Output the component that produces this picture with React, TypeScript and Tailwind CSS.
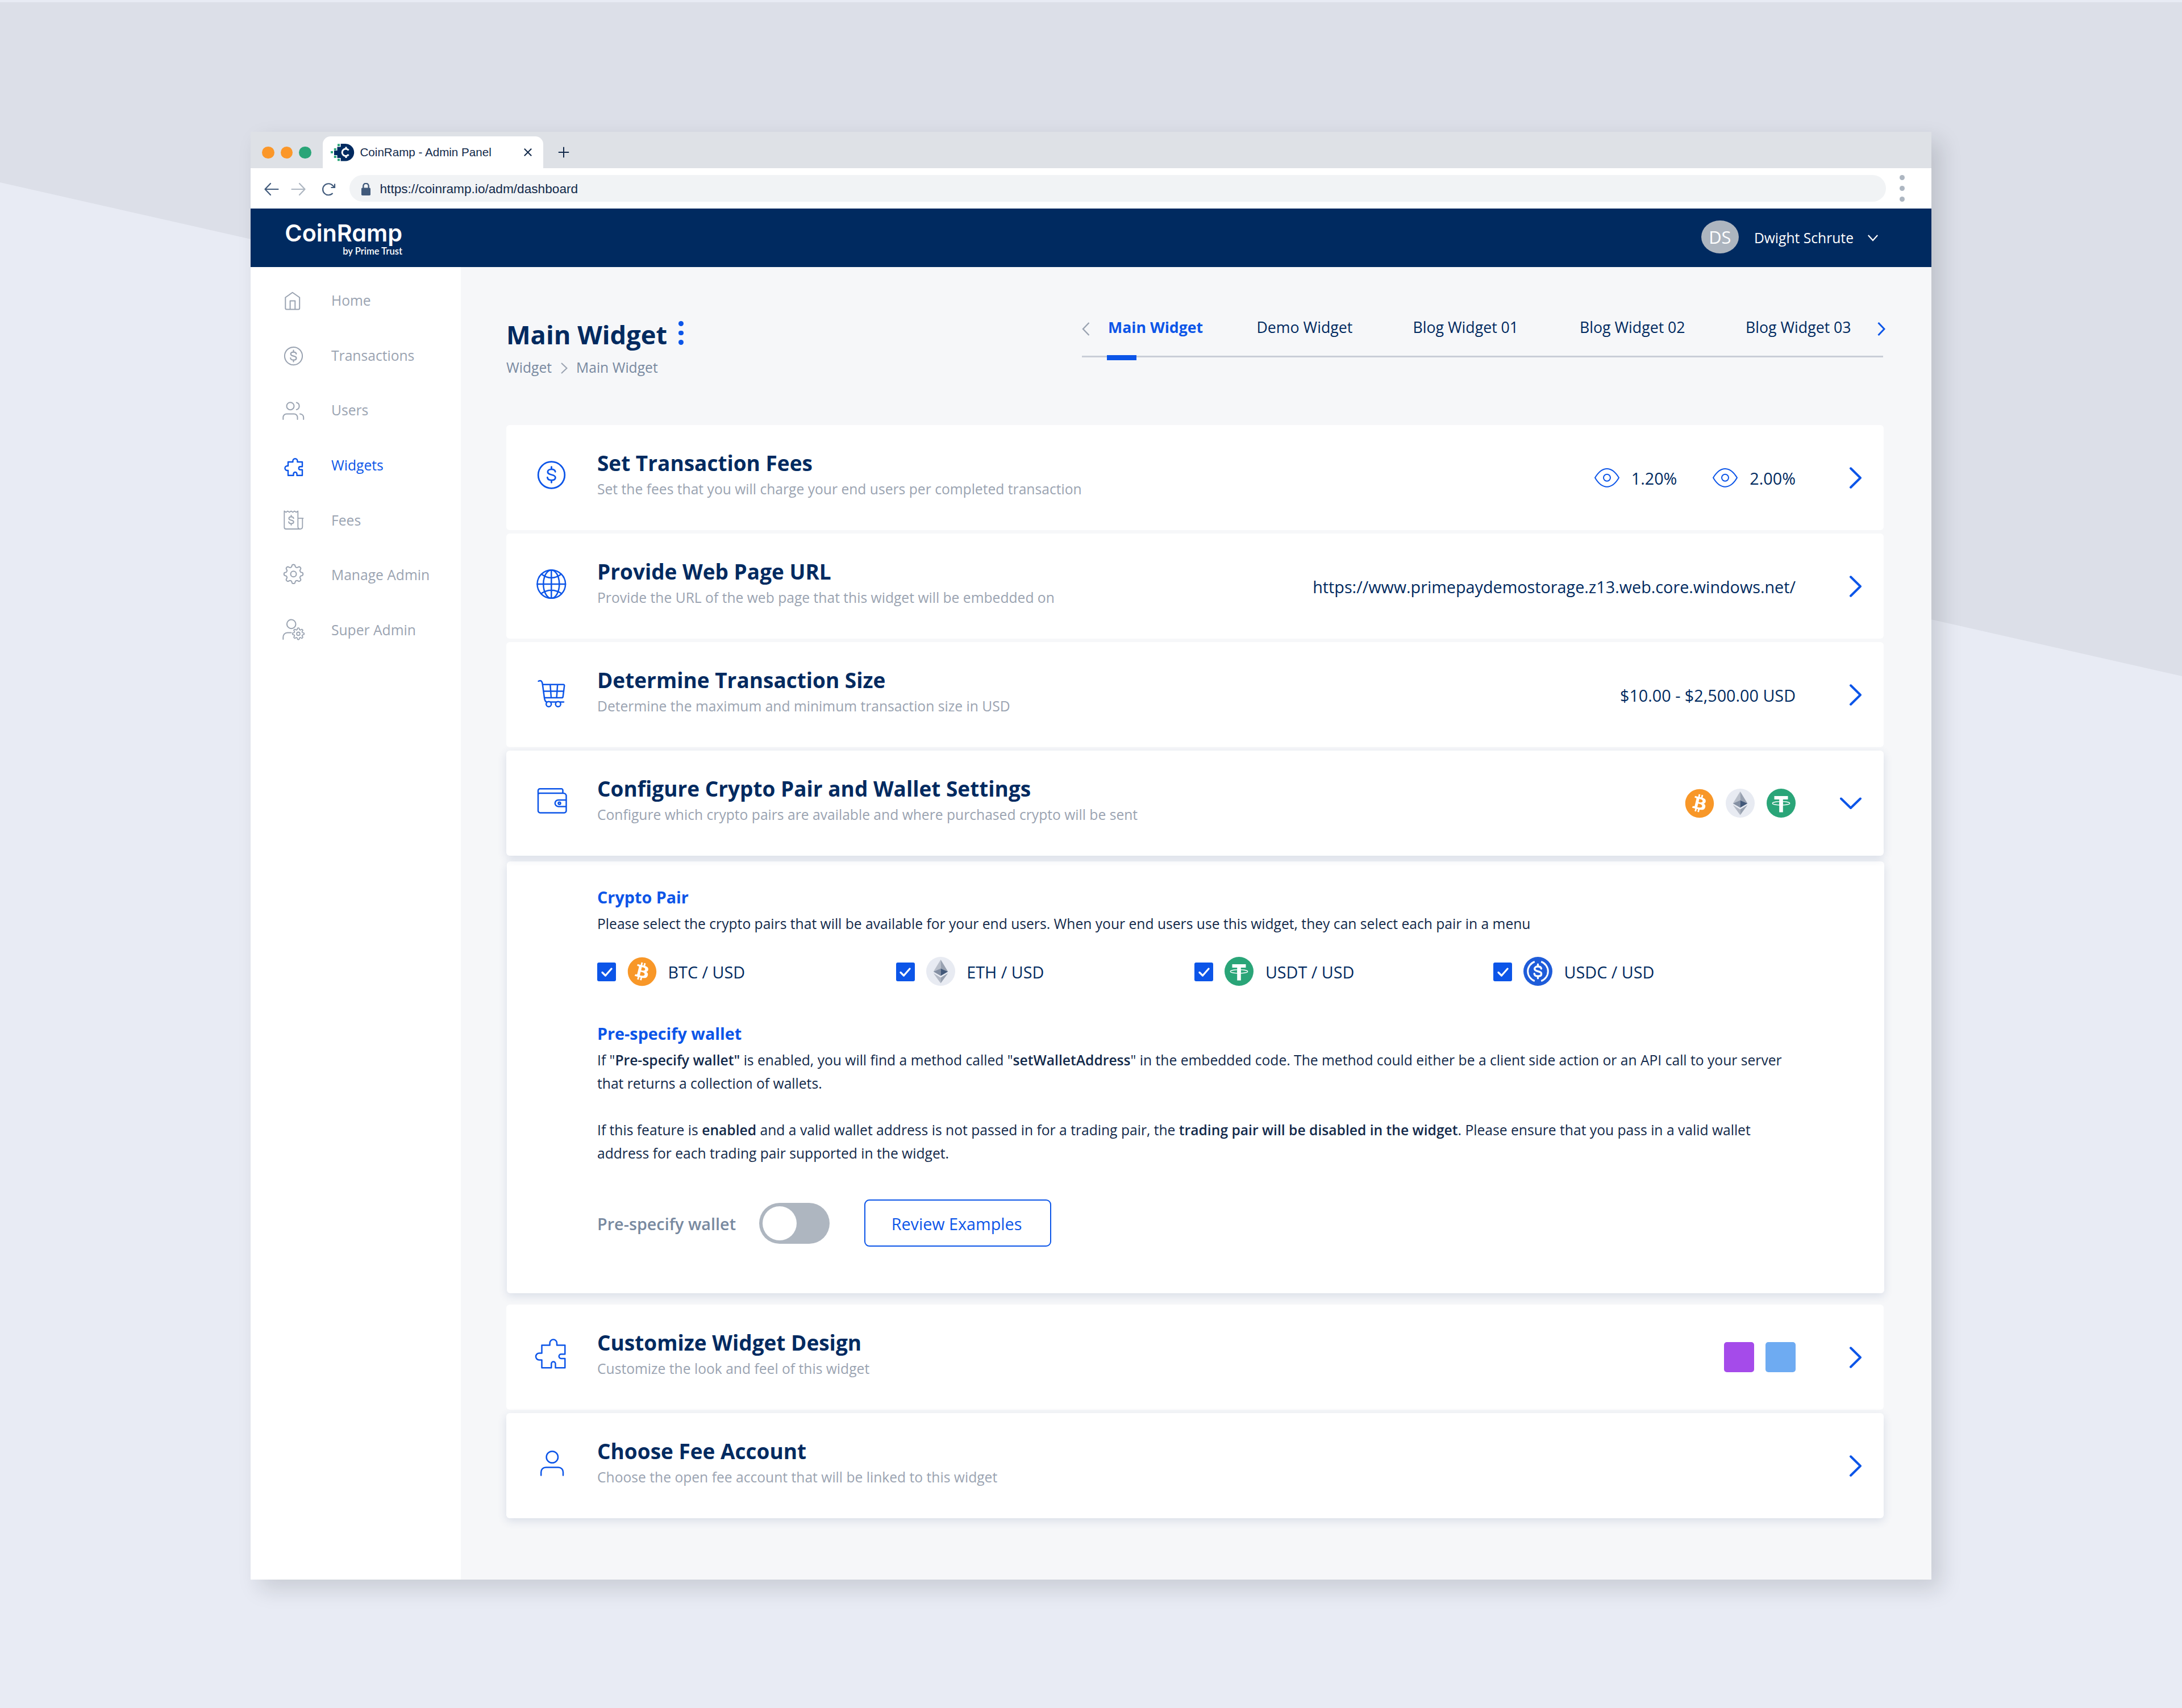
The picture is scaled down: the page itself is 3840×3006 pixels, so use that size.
import React from "react";
import { FaBitcoin } from "react-icons/fa";

type P = { children?: React.ReactNode };

/* ---------- shared marks ---------- */

function DollarMark({ cx, cy, k, sw }: { cx: number; cy: number; k: number; sw: number }) {
  return (
    <path
      transform={`translate(${cx} ${cy}) scale(${k})`}
      strokeWidth={sw / k}
      strokeLinecap="round"
      d="M4.9-3.8C4.5-5.9 2.7-7 0-7S-4.8-5.7-4.8-3.6-3.2-.7 0 0 5 1.5 5 3.6 3 7 0 7-5 5.700-5.200 3.400M0-10v3M0 7v3"
    />
  );
}

function gearPath(cx: number, cy: number, r: number, amp: number) {
  const n = 160;
  let d = "";
  for (let i = 0; i < n; i++) {
    const a = (i / n) * Math.PI * 2;
    const rad = r + amp * Math.tanh(1.8 * Math.cos(8 * a));
    d += `${i ? "L" : "M"}${(cx + rad * Math.cos(a)).toFixed(2)} ${(cy + rad * Math.sin(a)).toFixed(2)}`;
  }
  return d + "Z";
}

/* ---------- sidebar icons ---------- */

function NavSvg({ children }: P) {
  return (
    <svg width="40" height="40" viewBox="0 0 40 40" fill="none" stroke="currentColor" strokeWidth="2" strokeLinejoin="round" strokeLinecap="round" className="shrink-0 overflow-visible">
      {children}
    </svg>
  );
}

const navItems = [
  {
    label: "Home",
    icon: (
      <NavSvg>
        <path d="M5.3 15.500 17.700 6.800 30.200 15.500V34.300a2.200 2.200 0 0 1-2.200 2.200H7.500a2.200 2.200 0 0 1-2.200-2.200ZM13.600 36.500V21.500h8.700v15" />
      </NavSvg>
    ),
  },
  {
    label: "Transactions",
    icon: (
      <NavSvg>
        <circle cx="19.500" cy="21.600" r="15.600" />
        <DollarMark cx={19.5} cy={21.6} k={1} sw={2.2} />
      </NavSvg>
    ),
  },
  {
    label: "Users",
    icon: (
      <NavSvg>
        <circle cx="14" cy="13.700" r="6.500" />
        <path d="M1.300 37v-3.500c0-3.500 2.700-6 6-6h13.200c3.300 0 6 2.500 6 6V37M24.800 7.500a6.400 6.400 0 0 1 0 12.400M31 27.500c3.700.4 6.200 2.900 6.200 6.200V37" />
      </NavSvg>
    ),
  },
  {
    label: "Widgets",
    active: true,
    icon: (
      <NavSvg>
        <path strokeWidth="2.400" d="M10 15H18.400V13.300a4 4 0 0 1 8 0V15H35V23.300H31.500a2.700 2.700 0 0 0 0 5.400H35V38.700H25.500V36a3 3 0 0 0-6 0V38.700H10V30H8.500a4 4 0 0 1 0-8H10Z" />
      </NavSvg>
    ),
  },
  {
    label: "Fees",
    icon: (
      <NavSvg>
        <path strokeWidth="1.800" d="M3.300 4.500 6.300 6.500 9.300 4.500 12.300 6.500 15.300 4.500 18.300 6.500 21.300 4.500 24.300 6.500 27.300 4.500V32c0 2.500 1.500 4 4 4s4-1.500 4-4V17.200M3.300 4.500V33a3 3 0 0 0 3 3H31.300M27.300 17.200H36.500" />
        <DollarMark cx={15.5} cy={20.5} k={0.85} sw={2} />
      </NavSvg>
    ),
  },
  {
    label: "Manage Admin",
    icon: (
      <NavSvg>
        <path d={gearPath(19.5, 19.3, 14.7, 2.1)} />
        <circle cx="19.500" cy="19.300" r="5" />
      </NavSvg>
    ),
  },
  {
    label: "Super Admin",
    icon: (
      <NavSvg>
        <circle cx="15.700" cy="10.400" r="7.800" />
        <path d="M1.300 37V33.500c0-4.600 3-7.900 7.500-7.900H15.500" />
        <path strokeWidth="1.800" d={gearPath(28, 27.4, 8.8, 1.5)} />
        <circle strokeWidth="1.800" cx="28" cy="27.400" r="2.900" />
      </NavSvg>
    ),
  },
];

/* ---------- card icons ---------- */

function CardSvg({ children }: P) {
  return (
    <svg width="60" height="60" viewBox="0 0 60 60" fill="none" stroke="#0c55e8" strokeWidth="2.500" strokeLinejoin="round" strokeLinecap="round" className="mt-[58px] shrink-0 overflow-visible">
      {children}
    </svg>
  );
}

const dollarIcon = (
  <CardSvg>
    <circle cx="29.500" cy="30" r="23.300" strokeWidth="2.800" />
    <DollarMark cx={29.5} cy={29.5} k={1.38} sw={2.8} />
  </CardSvg>
);
const globeIcon = (
  <CardSvg>
    <circle cx="29.300" cy="31" r="24.800" />
    <ellipse cx="29.300" cy="31" rx="14" ry="24.800" />
    <path d="M29.300 6.200V55.800M4.500 31H54.100M12 13.500Q29.300 26.500 46.600 13.500M11.500 47.500Q29.300 36 47.100 47.500" />
  </CardSvg>
);
const cartIcon = (
  <CardSvg>
    <path d="M6.500 10.800c2.500-1 4.400-.9 5.500.3 1 1 1.500 3 1.800 5.400l3.200 23.500c.4 3.500 1.500 6.500 4 7.600H51M13.800 16.800H50.500a1.700 1.700 0 0 1 1.700 2L49.800 38c-.2 1.400-1 2-2.200 2H17M15.500 28.500H51M27.300 16.800 29 40M40.200 16.800 38.600 40" />
    <circle cx="24.700" cy="51.300" r="4.500" fill="#fff" />
    <circle cx="41.200" cy="51.300" r="4.500" fill="#fff" />
  </CardSvg>
);
const walletIcon = (
  <CardSvg>
    <path d="M6 20V12.500a3.200 3.200 0 0 1 3.200-3.200H47a2.500 2.500 0 0 1 2.500 2.500V17M6 19.500a2.500 2.500 0 0 1 2.500-2.500H50.500a5 5 0 0 1 5 5V48a3.500 3.500 0 0 1-3.500 3.500H9.500A3.500 3.500 0 0 1 6 48ZM55.500 29H41.500a5.700 5.700 0 0 0 0 11.400H55.500" />
    <circle cx="43.500" cy="34.700" r="2" />
  </CardSvg>
);
const puzzleIcon = (
  <CardSvg>
    <path d="M12.500 13.500H26.600V9.800a6.200 6.200 0 0 1 12.400 0V13.500H53.300V29.300H46.500a3.800 3.800 0 0 0 0 7.600H53.300V53.300H36.500V46.200a3.600 3.600 0 0 0-7.200 0V53.300H12.500V39.500H8a6 6 0 0 1 0-12H12.500Z" />
  </CardSvg>
);
const personIcon = (
  <CardSvg>
    <circle cx="30.800" cy="19.400" r="10.200" />
    <path d="M11.200 51.500V46c0-5 3.500-8.500 8.500-8.500H41.500c5 0 8.500 3.500 8.500 8.500v5.500" />
  </CardSvg>
);

function Eye() {
  return (
    <svg width="44" height="34" viewBox="0 0 44 34" fill="none" stroke="#0c55e8" strokeWidth="2" strokeLinejoin="round">
      <path d="M1 16.800C7.500 6 14.500 1 22 1s14.500 5 21 15.800C36.500 28 29.500 32.700 22 32.700S7.500 28 1 16.800Z" />
      <circle cx="22" cy="16.800" r="6" />
    </svg>
  );
}

/* ---------- coins ---------- */

function Btc() {
  return (
    <span className="flex size-[51px] items-center justify-center rounded-full bg-[radial-gradient(circle,#fff_60%,transparent_62%)]">
      <FaBitcoin className="size-[52px] shrink-0 text-[#f89728]" />
    </span>
  );
}
function Eth() {
  return (
    <svg width="51" height="51" viewBox="0 0 51 51">
      <circle cx="25.500" cy="25.500" r="25.500" fill="#e8ebf2" />
      <path d="M25.500 5 12.700 26 25.500 20.500Z" fill="#b9bfca" />
      <path d="M25.500 5 38.300 26 25.500 20.500Z" fill="#98a1b0" />
      <path d="M12.700 26 25.500 20.500V33.500Z" fill="#8590a3" />
      <path d="M38.300 26 25.500 20.500V33.500Z" fill="#425879" />
      <path d="M12.700 28.800 25.500 36.600V46.500Z" fill="#b2b8c4" />
      <path d="M38.300 28.800 25.500 36.600V46.500Z" fill="#98a1b0" />
    </svg>
  );
}
function Usdt() {
  return (
    <svg width="51" height="51" viewBox="0 0 51 51">
      <circle cx="25.500" cy="25.500" r="25.500" fill="#2aa578" />
      <path d="M13.500 13H37.500V19H28.800V41.500H22.200V19H13.500Z" fill="#fff" />
      <ellipse cx="25.500" cy="25.700" rx="15.200" ry="3.100" fill="none" stroke="#fff" strokeWidth="1.300" />
      <path d="M22.200 24.500V27.600Q25.500 28.300 28.800 27.600V24.500Z" fill="#fff" />
    </svg>
  );
}
function Usdc() {
  return (
    <svg width="51" height="51" viewBox="0 0 51 51" fill="none" stroke="#fff">
      <circle cx="25.500" cy="25.500" r="25.500" fill="#1e5cd9" stroke="none" />
      <path strokeWidth="3" d="M19.800 8.500A18 18 0 0 0 19.800 42.500M31.200 8.500A18 18 0 0 1 31.200 42.500" />
      <DollarMark cx={25.5} cy={25.5} k={1.22} sw={3.4} />
    </svg>
  );
}

/* ---------- settings cards ---------- */

function Chevron({ down }: { down?: boolean }) {
  return (
    <svg width="38" height="38" viewBox="0 0 38 38" fill="none" stroke="#0c55e8" strokeWidth="4" strokeLinecap="round" strokeLinejoin="round" className="ml-[78px] shrink-0">
      <path d={down ? "M2 10.500 19 27 36 10.500" : "M19 2.300 36 19 19 35.700"} />
    </svg>
  );
}

function Card({ icon, title, sub, open, raised, children }: P & { icon: React.ReactNode; title: string; sub: string; open?: boolean; raised?: boolean }) {
  return (
    <section className={`flex h-[185px] w-[2424px] rounded-[6px] bg-white pl-[50px] pr-[39px] ${raised ? "shadow-[0_5px_16px_rgba(40,70,130,0.14)]" : ""}`}>
      {icon}
      <div className="ml-[50px] flex-1 pt-[44px]">
        <h2 className="text-[36.970px] font-bold leading-[46px] text-[#002a60]">{title}</h2>
        <p className="text-[24.650px] leading-[46px] text-[#9aa3b1]">{sub}</p>
      </div>
      <div className="flex items-center text-[28.760px] text-[#002a60]">
        {children}
        <Chevron down={open} />
      </div>
    </section>
  );
}

const pairs = [
  { label: "BTC / USD", coin: <Btc /> },
  { label: "ETH / USD", coin: <Eth /> },
  { label: "USDT / USD", coin: <Usdt /> },
  { label: "USDC / USD", coin: <Usdc /> },
];

function CryptoPanel() {
  return (
    <section className="mb-[20.500px] ml-px mt-[10px] h-[759.500px] w-[2424px] rounded-[6px] bg-white pl-[159px] pt-[39px] text-[24.650px] leading-[41.080px] text-[#12294a] shadow-[0_5px_16px_rgba(40,70,130,0.14)]">
      <h3 className="text-[28.760px] font-bold leading-[48px] text-[#0c55e8]">Crypto Pair</h3>
      <p className="mt-[2px]">Please select the crypto pairs that will be available for your end users. When your end users use this widget, they can select each pair in a menu</p>
      <div className="mt-[38px] flex">
        {pairs.map((p) => (
          <div key={p.label} className="flex h-[51px] w-[525.700px] items-center">
            <span className="mt-[2px] flex size-[33px] items-center justify-center rounded-[3px] bg-[#0c55e8]">
              <svg width="20" height="18" viewBox="0 0 20 18" fill="none" stroke="#fff" strokeWidth="3.200" strokeLinecap="round" strokeLinejoin="round">
                <path d="M2 9.500 7.500 15 18 3" />
              </svg>
            </span>
            <span className="ml-[20px] flex">{p.coin}</span>
            <span className="ml-[20.500px] mt-[2px] text-[28.760px] text-[#002a60]">{p.label}</span>
          </div>
        ))}
      </div>
      <h3 className="mt-[60px] text-[28.760px] font-bold leading-[48px] text-[#0c55e8]">Pre-specify wallet</h3>
      <p className="mt-[2px] whitespace-nowrap">
        If "<b className="font-semibold">Pre-specify wallet"</b> is enabled, you will find a method called "<b className="font-semibold">setWalletAddress</b>" in the embedded code. The method could either be a client side action or an API call to your server
        <br />
        that returns a collection of wallets.
        <br />
        <br />
        If this feature is <b className="font-semibold">enabled</b> and a valid wallet address is not passed in for a trading pair, the <b className="font-semibold">trading pair will be disabled in the widget</b>. Please ensure that you pass in a valid wallet
        <br />
        address for each trading pair supported in the widget.
      </p>
      <div className="mt-[61px] flex h-[83px] items-center">
        <span className="w-[285px] pt-[2px] text-[28.760px] font-semibold text-[#7889a0]">Pre-specify wallet</span>
        <span className="mt-[1px] flex h-[72px] w-[124px] items-center rounded-full bg-[#aeb6c0] pl-[6px]">
          <span className="size-[60px] rounded-full bg-white" />
        </span>
        <button className="ml-[61px] flex h-[83px] w-[329px] items-center justify-center rounded-[9px] border-[2.500px] border-[#0c55e8] pr-[4px] pt-[2px] text-[28.760px] text-[#0c55e8]">Review Examples</button>
      </div>
    </section>
  );
}

/* ---------- browser chrome ---------- */

function Favicon() {
  return (
    <svg width="42" height="31" viewBox="0 0 42 31">
      <path d="M17.600 0H26A15.200 15.200 0 0 1 26 30.400H17.600V25H11.500V20H6V12H11.500V5.500H17.600Z" fill="#002a60" />
      <g fill="#2aa578">
        <path d="M12 .3h4v4h-4zM5.800 8h4v3.500h-4zM0 13h4v3.800H0zM5.800 21h4v4h-4zM12 26.200h4v4h-4z" />
      </g>
      <path d="M31.500 11.500A6.300 6.300 0 1 0 31.500 19M27 5.500v4M27 21v4" fill="none" stroke="#fff" strokeWidth="3" />
    </svg>
  );
}

function Chrome() {
  return (
    <>
      <div className="flex h-[64px] items-end bg-[#dee1e6] font-['Liberation_Sans',Arial,sans-serif]">
        <div className="mb-[17px] ml-[20px] flex gap-[11px]">
          <span className="size-[21.500px] rounded-full bg-[#fb9729]" />
          <span className="size-[21.500px] rounded-full bg-[#fb9729]" />
          <span className="size-[21.500px] rounded-full bg-[#2aa578]" />
        </div>
        <div className="ml-[20px] flex h-[56px] w-[388px] items-center rounded-t-[14px] bg-white pl-[14px]">
          <Favicon />
          <span className="ml-[10px] flex-1 text-[20.600px] text-[#12294a]">CoinRamp - Admin Panel</span>
          <svg width="14" height="14" viewBox="0 0 14 14" stroke="#12294a" strokeWidth="2" className="mr-[20px]">
            <path d="M.8.8 13.200 13.200M13.200.8.8 13.200" />
          </svg>
        </div>
        <svg width="20" height="20" viewBox="0 0 20 20" stroke="#12294a" strokeWidth="2" className="mb-[18px] ml-[26px]">
          <path d="M10 .8V19.200M.8 10H19.200" />
        </svg>
      </div>
      <div className="flex h-[71px] items-center bg-white font-['Liberation_Sans',Arial,sans-serif]">
        <svg width="26" height="24" viewBox="0 0 26 24" fill="none" stroke="#415a7b" strokeWidth="2.200" strokeLinecap="round" strokeLinejoin="round" className="ml-[24px] mt-[3px]">
          <path d="M24.500 12H1.500M11 2 1.500 12 11 22" />
        </svg>
        <svg width="26" height="24" viewBox="0 0 26 24" fill="none" stroke="#adb6c1" strokeWidth="2.200" strokeLinecap="round" strokeLinejoin="round" className="ml-[21px] mt-[3px]">
          <path d="M1.500 12H24.500M15 2 24.500 12 15 22" />
        </svg>
        <svg width="24" height="24" viewBox="0 0 24 24" fill="none" stroke="#415a7b" strokeWidth="2.200" className="ml-[29px] mt-[2px]">
          <path d="M18.500 19A10 10 0 1 1 18.500 5.500L21.500 8.500M22 2.500V9H15.500" />
        </svg>
        <div className="ml-[24px] flex h-[47px] w-[2704px] items-center rounded-full bg-[#f1f3f5] pl-[21px]">
          <svg width="16" height="22" viewBox="0 0 16 22" fill="#415a7b" className="mt-[2px]">
            <rect y="8.500" width="16" height="13.500" rx="1.800" />
            <path d="M3.300 9.500V5.500a4.700 4.700 0 0 1 9.400 0V9.500" fill="none" stroke="#415a7b" strokeWidth="2.400" />
          </svg>
          <span className="ml-[16.500px] mt-[2px] text-[22.650px] text-[#12294a]">https://coinramp.io/adm/dashboard</span>
        </div>
        <div className="ml-[24px] flex flex-col gap-[10.500px]">
          <span className="size-[8.800px] rounded-full bg-[#adb6c1]" />
          <span className="size-[8.800px] rounded-full bg-[#adb6c1]" />
          <span className="size-[8.800px] rounded-full bg-[#adb6c1]" />
        </div>
      </div>
    </>
  );
}

function Header() {
  return (
    <header className="flex h-[103px] items-start justify-between bg-[#002a60] text-white">
      <div className="ml-[61px] mt-[18px] flex w-[206px] flex-col items-end">
        <span className="whitespace-nowrap font-['Inter',sans-serif] text-[41.300px] font-semibold leading-[50px] [font-feature-settings:'cv11']">CoinRamp</span>
        <span className="mt-[-3px] whitespace-nowrap font-['Lato',sans-serif] text-[16.600px] font-semibold leading-[20px]">by Prime Trust</span>
      </div>
      <div className="mr-[94px] mt-[21px] flex h-[58px] items-center">
        <span className="flex h-[58px] w-[66px] items-center justify-center rounded-[50%] bg-[#adb5bf] text-[30.800px]">DS</span>
        <span className="ml-[27px] mt-[5px] text-[24.650px]">Dwight Schrute</span>
        <svg width="18" height="12" viewBox="0 0 18 12" fill="none" stroke="#fff" strokeWidth="2.200" className="ml-[25px] mt-[3px]">
          <path d="M.8 1 9 10 17.200 1" />
        </svg>
      </div>
    </header>
  );
}

function PageHead() {
  return (
    <div className="flex h-[278px] items-start justify-between">
      <div className="pt-[89px]">
        <div className="flex items-center">
          <h1 className="text-[45.200px] font-bold leading-[60px] text-[#002a60]">Main Widget</h1>
          <div className="-mt-[6px] ml-[20px] flex flex-col gap-[8px]">
            <span className="size-[8.500px] rounded-full bg-[#0c55e8]" />
            <span className="size-[8.500px] rounded-full bg-[#0c55e8]" />
            <span className="size-[8.500px] rounded-full bg-[#0c55e8]" />
          </div>
        </div>
        <div className="mt-[8px] flex items-center text-[24.650px] leading-[40px] text-[#7889a0]">
          Widget
          <svg width="12" height="20" viewBox="0 0 12 20" fill="none" stroke="#9aa3b1" strokeWidth="2" className="ml-[16px] mr-[15px] mt-[2px]">
            <path d="M1 1 10.500 10 1 19" />
          </svg>
          Main Widget
        </div>
      </div>
      <div className="mr-[80px] w-[1415px] pt-[86px]">
        <div className="flex items-center text-[26.700px] leading-[40px] text-[#002a60]">
          <svg width="14" height="24" viewBox="0 0 14 24" fill="none" stroke="#9aa3b1" strokeWidth="2.400" className="mr-[32px] mt-[6px]">
            <path d="M12.500 1 2 12 12.500 23" />
          </svg>
          <span className="w-[261.500px] font-bold text-[#0c55e8]">Main Widget</span>
          <span className="w-[275px]">Demo Widget</span>
          <span className="w-[293.500px]">Blog Widget 01</span>
          <span className="w-[292px]">Blog Widget 02</span>
          <span className="flex-1">Blog Widget 03</span>
          <svg width="14" height="24" viewBox="0 0 14 24" fill="none" stroke="#0c55e8" strokeWidth="3" className="mr-px mt-[6px]">
            <path d="M1.500 1 12 12 1.500 23" />
          </svg>
        </div>
        <div className="relative mt-[30px] h-[3px] w-[1410px] bg-[#c9ced7]">
          <span className="absolute -top-px left-[44px] h-[9px] w-[52px] bg-[#0c55e8]" />
        </div>
      </div>
    </div>
  );
}

export default function App() {
  return (
    <div className="relative h-[3006px] w-[3840px] overflow-hidden bg-[#dcdfe8] pl-[441px] pt-[232px] font-['Open_Sans','Noto_Sans',sans-serif]">
      <div className="absolute inset-0 bg-[#e8ebf4] [clip-path:polygon(0_321px,100%_1190px,100%_100%,0_100%)]" />
      <div className="absolute inset-x-0 top-0 h-[4px] bg-[#e8ebf4]" />
      <div className="relative flex h-[2548px] w-[2958px] flex-col bg-[#f6f7f9] shadow-[16px_16px_36px_rgba(20,25,35,0.150)]">
        <Chrome />
        <Header />
        <div className="flex flex-1">
          <nav className="w-[370px] bg-white pt-[10px]">
            {navItems.map((n) => (
              <a key={n.label} className={`flex h-[96.600px] items-center pl-[56px] text-[24.650px] ${n.active ? "text-[#0c55e8]" : "text-[#9aa3b1]"}`}>
                {n.icon}
                <span className="ml-[46px] mt-[3px]">{n.label}</span>
              </a>
            ))}
          </nav>
          <main className="w-[2588px] pl-[80px]">
            <PageHead />
            <div className="flex flex-col gap-[6px]">
              <Card icon={dollarIcon} title="Set Transaction Fees" sub="Set the fees that you will charge your end users per completed transaction">
                <Eye />
                <span className="ml-[21px] mt-[2px]">1.20%</span>
                <span className="ml-[63px] flex">
                  <Eye />
                </span>
                <span className="ml-[21px] mt-[2px]">2.00%</span>
              </Card>
              <Card icon={globeIcon} title="Provide Web Page URL" sub="Provide the URL of the web page that this widget will be embedded on">
                <span className="mt-[2px]">https://www.primepaydemostorage.z13.web.core.windows.net/</span>
              </Card>
              <Card icon={cartIcon} title="Determine Transaction Size" sub="Determine the maximum and minimum transaction size in USD">
                <span className="mt-[2px]">$10.00 - $2,500.00 USD</span>
              </Card>
              <Card icon={walletIcon} title="Configure Crypto Pair and Wallet Settings" sub="Configure which crypto pairs are available and where purchased crypto will be sent" open raised>
                <span className="flex gap-[21px]">
                  <Btc />
                  <Eth />
                  <Usdt />
                </span>
              </Card>
            </div>
            <CryptoPanel />
            <div className="flex flex-col gap-[6px]">
              <Card icon={puzzleIcon} title="Customize Widget Design" sub="Customize the look and feel of this widget">
                <span className="flex gap-[20.500px]">
                  <span className="size-[53px] rounded-[5px] bg-[#a54bea]" />
                  <span className="size-[53px] rounded-[5px] bg-[#6eabf2]" />
                </span>
              </Card>
              <Card icon={personIcon} title="Choose Fee Account" sub="Choose the open fee account that will be linked to this widget" raised />
            </div>
          </main>
        </div>
      </div>
    </div>
  );
}
